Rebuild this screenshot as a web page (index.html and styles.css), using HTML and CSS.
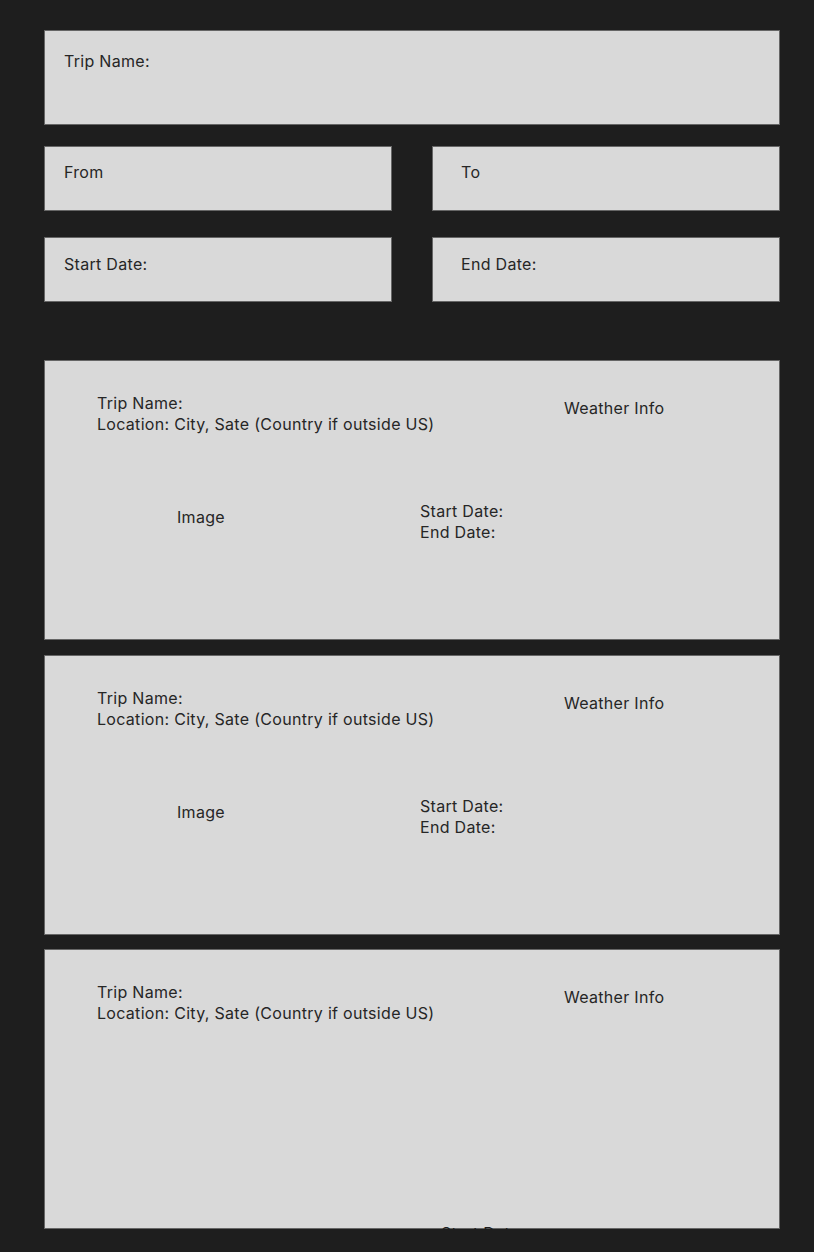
FILE: index.html
```html
<!DOCTYPE html>
<html lang="en">
<head>
<meta charset="utf-8">
<title>Trips</title>
<link rel="stylesheet" href="styles.css">
</head>
<body>
<main class="page">
  <section class="form">
    <div class="field field--wide">Trip Name:</div>
    <div class="field-row">
      <div class="field field--left">From</div>
      <div class="field field--right">To</div>
    </div>
    <div class="field-row">
      <div class="field field--left">Start Date:</div>
      <div class="field field--right">End Date:</div>
    </div>
  </section>

  <section class="cards">
    <article class="card">
      <div class="card-head">
        <div class="trip-info">
          <div>Trip Name:</div>
          <div>Location: City, Sate (Country if outside US)</div>
        </div>
        <div class="weather">Weather Info</div>
      </div>
      <div class="card-body">
        <div class="image-label">Image</div>
        <div class="dates">
          <div>Start Date:</div>
          <div>End Date:</div>
        </div>
      </div>
    </article>

    <article class="card">
      <div class="card-head">
        <div class="trip-info">
          <div>Trip Name:</div>
          <div>Location: City, Sate (Country if outside US)</div>
        </div>
        <div class="weather">Weather Info</div>
      </div>
      <div class="card-body">
        <div class="image-label">Image</div>
        <div class="dates">
          <div>Start Date:</div>
          <div>End Date:</div>
        </div>
      </div>
    </article>

    <article class="card card--last">
      <div class="card-head">
        <div class="trip-info">
          <div>Trip Name:</div>
          <div>Location: City, Sate (Country if outside US)</div>
        </div>
        <div class="weather">Weather Info</div>
      </div>
      <div class="card-body card-body--overflow">
        <div class="dates">
          <div>Start Date:</div>
        </div>
      </div>
    </article>
  </section>
</main>
</body>
</html>
```

FILE: styles.css
```css
html, body {
  margin: 0;
  background: #1e1e1e;
}

body {
  font-family: Inter, "Noto Sans", sans-serif;
  font-size: 16px;
  letter-spacing: 0.3px;
  color: #262626;
}

.page {
  padding: 30px 34px 0 44px;
  height: 1252px;
  box-sizing: border-box;
  overflow: hidden;
}

.form {
  display: flex;
  flex-direction: column;
}

.field {
  box-sizing: border-box;
  background: #d9d9d9;
  border: 1px solid #666666;
  line-height: 20px;
}

.field--wide {
  height: 95px;
  padding: 20px 19px;
}

.field-row {
  display: grid;
  grid-template-columns: 1fr 1fr;
  column-gap: 40px;
}

.field-row .field {
  height: 65px;
  padding-top: 15px;
}

.field--wide + .field-row {
  margin-top: 21px;
}

.field-row + .field-row {
  margin-top: 26px;
}

.field-row + .field-row .field {
  padding-top: 16px;
}

.field--left {
  padding-left: 19px;
}

.field--right {
  padding-left: 28px;
}

.cards {
  margin-top: 58px;
  display: flex;
  flex-direction: column;
  gap: 15px;
}

.card {
  box-sizing: border-box;
  height: 280px;
  background: #d9d9d9;
  border: 1px solid #666666;
  padding: 32px 0 0 52px;
  line-height: 21px;
}

.card--last {
  margin-top: -1px;
}

.card-head {
  display: grid;
  grid-template-columns: 467px auto;
}

.weather {
  margin-top: 5px;
}

.card-body {
  display: flex;
  align-items: center;
  margin-top: 66px;
}

.image-label {
  width: 243px;
  padding-left: 80px;
  margin-top: -9px;
}

.card-body--overflow {
  margin-top: 199px;
  padding-left: 344px;
  color: #1e1e1e;
}
```
